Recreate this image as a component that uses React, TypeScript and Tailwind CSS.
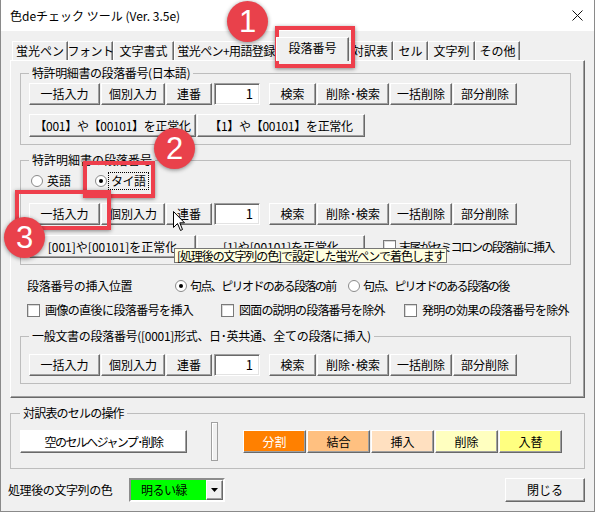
import React from "react";

const raised =
  "border border-t-white border-l-white border-r-[#696969] border-b-[#696969] shadow-[inset_-1px_-1px_0_#a0a0a0]";

function Btn({
  className = "",
  bg = "bg-[#f0f0f0]",
  children,
}: {
  className?: string;
  bg?: string;
  children: React.ReactNode;
}) {
  return (
    <div
      className={`flex items-center justify-center shrink-0 whitespace-nowrap leading-[14px] ${raised} ${bg} ${className}`}
    >
      {children}
    </div>
  );
}

function NumInput({ className = "" }: { className?: string }) {
  return (
    <div
      className={`w-[46px] h-[22px] shrink-0 bg-white border border-t-[#a0a0a0] border-l-[#a0a0a0] border-b-white border-r-white shadow-[inset_1px_1px_0_#696969,inset_-1px_-1px_0_#e3e3e3] flex items-center justify-end pr-[6px] text-[13px] leading-[14px] ${className}`}
    >
      1
    </div>
  );
}

function Radio({ checked = false }: { checked?: boolean }) {
  return (
    <span className="w-[12px] h-[12px] rounded-full border border-[#8a8a8a] bg-white flex items-center justify-center shrink-0">
      {checked && <span className="w-[4px] h-[4px] rounded-full bg-black" />}
    </span>
  );
}

function Check() {
  return (
    <span className="w-[13px] h-[13px] border border-[#7a7a7a] bg-white shrink-0 shadow-[inset_1px_1px_0_#d8d8d8]" />
  );
}

function Group({
  legend,
  className = "",
  legendClass = "",
  children,
}: {
  legend: string;
  className?: string;
  legendClass?: string;
  children: React.ReactNode;
}) {
  return (
    <fieldset className={`border border-[#bdbdbd] ${className}`}>
      <legend className={`px-[3px] leading-[16px] whitespace-nowrap ${legendClass}`}>{legend}</legend>
      {children}
    </fieldset>
  );
}

function ActionRow() {
  return (
    <div className="flex items-center h-[22px]">
      <Btn className="w-[71px] h-[22px]">一括入力</Btn>
      <Btn className="w-[64px] h-[22px] ml-[1px]">個別入力</Btn>
      <Btn className="w-[46px] h-[22px] ml-[1px]">連番</Btn>
      <NumInput className="ml-[2px]" />
      <Btn className="w-[47px] h-[22px] ml-[9px]">検索</Btn>
      <Btn className="w-[72px] h-[22px] ml-[1px]">削除･検索</Btn>
      <Btn className="w-[62px] h-[22px] ml-[1px]">一括削除</Btn>
      <Btn className="w-[64px] h-[22px] ml-[1px]">部分削除</Btn>
    </div>
  );
}

function Tab({
  label,
  w,
  selected = false,
  textClass = "",
}: {
  label: string;
  w: string;
  selected?: boolean;
  textClass?: string;
}) {
  if (selected) {
    return (
      <div
        className={`${w} h-[24px] -mb-[1px] -mx-[2px] relative z-10 bg-[#f0f0f0] border-t border-l border-t-white border-l-white border-r border-r-[#696969] shadow-[inset_-1px_0_0_#a0a0a0] flex justify-center pt-[2px] leading-[16px] whitespace-nowrap`}
      >
        {label}
      </div>
    );
  }
  return (
    <div
      className={`${w} h-[19px] bg-[#f0f0f0] border-t border-l border-t-white border-l-white border-r border-r-[#696969] shadow-[inset_-1px_0_0_#a0a0a0] flex items-center justify-center leading-[16px] whitespace-nowrap ${textClass}`}
    >
      {label}
    </div>
  );
}

export default function App() {
  return (
    <div className="w-[595px] h-[513px] bg-white relative overflow-hidden font-['Noto_Sans_CJK_JP','Noto_Sans',sans-serif] text-[12px] text-black">
      <div className="w-[595px] h-[512px] bg-[#f0f0f0] border-l border-r border-b border-[#8a8a8a] flex flex-col">
        {/* Title bar */}
        <div className="h-[31px] bg-white flex items-center justify-between pl-[9px] pr-[10px] shrink-0">
          <span className="leading-[16px] whitespace-nowrap">色deチェック ツール (Ver. 3.5e)</span>
          <svg width="11" height="11" viewBox="0 0 11 11" className="mr-[1px]">
            <path d="M0.5 0.5 L10.5 10.5 M10.5 0.5 L0.5 10.5" stroke="#111" strokeWidth="1" />
          </svg>
        </div>

        {/* Body */}
        <div className="flex flex-col pl-[9px] pr-[9px]">
          {/* Tabs */}
          <div className="mt-[6px] h-[23px] flex items-end pl-[2px]">
            <Tab label="蛍光ペン" w="w-[56px]" />
            <Tab label="フォント" w="w-[45px]" textClass="tracking-[-0.5px]" />
            <Tab label="文字書式" w="w-[61px]" />
            <Tab label="蛍光ペン+用語登録" w="w-[104px]" textClass="tracking-[-0.6px]" />
            <Tab label="段落番号" w="w-[73px]" selected />
            <Tab label="対訳表" w="w-[46px]" />
            <Tab label="セル" w="w-[35px]" />
            <Tab label="文字列" w="w-[47px]" />
            <Tab label="その他" w="w-[45px]" />
          </div>

          {/* Tab panel */}
          <div className="w-[575px] h-[338px] border border-t-white border-l-white border-r-[#696969] border-b-[#696969] shadow-[inset_-1px_-1px_0_#a0a0a0] pt-[4px] pl-[9px] flex flex-col">
            <Group
              legend="特許明細書の段落番号(日本語)"
              legendClass="tracking-[-0.4px]"
              className="w-[551px] px-[8px] pt-[2px] pb-[7px]"
            >
              <ActionRow />
              <div className="flex mt-[9px]">
                <Btn className="w-[167px] h-[23px] tracking-[-0.3px]">【001】や【00101】を正常化</Btn>
                <Btn className="w-[168px] h-[23px] ml-[1px] tracking-[-0.3px]">【1】や【00101】を正常化</Btn>
              </div>
            </Group>

            <Group legend="特許明細書の段落番号" className="w-[551px] mt-[7px] px-[8px] pt-[4px] pb-[6px]">
              <div className="flex items-center h-[18px] pl-[2px]">
                <div className="w-[64px] flex items-center gap-[4px]">
                  <Radio />
                  <span className="leading-[16px]">英語</span>
                </div>
                <div className="flex items-center gap-[1px]">
                  <Radio checked />
                  <span className="leading-[16px] px-[2px] border border-dotted border-black tracking-[-0.5px]">タイ語</span>
                </div>
              </div>
              <div className="mt-[13px]">
                <ActionRow />
              </div>
              <div className="flex items-center mt-[10px]">
                <Btn className="w-[167px] h-[23px]">[001]や[00101]を正常化</Btn>
                <Btn className="w-[168px] h-[23px] ml-[1px]">[1]や[00101]を正常化</Btn>
                <div className="flex items-center ml-[18px] gap-[3px]">
                  <Check />
                  <span className="leading-[16px] whitespace-nowrap tracking-[-1.7px]">末尾がセミコロンの段落前に挿入</span>
                </div>
              </div>
            </Group>

            <div className="flex items-center h-[18px] mt-[12px] pl-[7px]">
              <span className="w-[148px] leading-[16px] whitespace-nowrap tracking-[-0.3px]">段落番号の挿入位置</span>
              <div className="w-[173px] flex items-center gap-[3px]">
                <Radio checked />
                <span className="leading-[16px] whitespace-nowrap tracking-[-1.6px]">句点、ピリオドのある段落の前</span>
              </div>
              <div className="flex items-center gap-[3px]">
                <Radio />
                <span className="leading-[16px] whitespace-nowrap tracking-[-1.6px]">句点、ピリオドのある段落の後</span>
              </div>
            </div>

            <div className="flex items-center h-[18px] mt-[6px] pl-[7px]">
              <div className="w-[194px] flex items-center gap-[5px]">
                <Check />
                <span className="leading-[16px] whitespace-nowrap tracking-[-0.6px]">画像の直後に段落番号を挿入</span>
              </div>
              <div className="w-[183px] flex items-center gap-[5px]">
                <Check />
                <span className="leading-[16px] whitespace-nowrap tracking-[-0.8px]">図面の説明の段落番号を除外</span>
              </div>
              <div className="flex items-center gap-[5px]">
                <Check />
                <span className="leading-[16px] whitespace-nowrap tracking-[-0.7px]">発明の効果の段落番号を除外</span>
              </div>
            </div>

            <Group
              legend="一般文書の段落番号([0001]形式、日･英共通、全ての段落に挿入)"
              legendClass="tracking-[-0.3px]"
              className="w-[551px] mt-[9px] px-[8px] pt-[10px] pb-[7px]"
            >
              <ActionRow />
            </Group>
          </div>

          {/* Translation table group */}
          <Group
            legend="対訳表のセルの操作"
            legendClass="tracking-[-0.8px]"
            className="w-[575px] mt-[7px] px-[9px] pt-[1px] pb-[7px]"
          >
            <div className="flex items-center h-[39px]">
              <Btn className="w-[167px] h-[23px] tracking-[-1.6px]" bg="bg-white">
                空のセルへジャンプ･削除
              </Btn>
              <div className="w-[7px] h-[39px] ml-[24px] border border-[#a0a0a0] bg-[#f0f0f0] shadow-[inset_1px_1px_0_white]" />
              <div className="flex items-center gap-[1px] ml-[25px]">
                <Btn className="w-[63px] h-[23px] text-white" bg="bg-[#ff8000]">分割</Btn>
                <Btn className="w-[63px] h-[23px]" bg="bg-[#ffc080]">結合</Btn>
                <Btn className="w-[63px] h-[23px]" bg="bg-[#ffe0c0]">挿入</Btn>
                <Btn className="w-[63px] h-[23px]" bg="bg-[#ffffc0]">削除</Btn>
                <Btn className="w-[63px] h-[23px]" bg="bg-[#ffff80]">入替</Btn>
              </div>
            </div>
          </Group>

          {/* Bottom row */}
          <div className="flex items-center h-[25px] mt-[8px] -ml-[2px]">
            <span className="w-[121px] leading-[16px] whitespace-nowrap tracking-[-0.4px]">処理後の文字列の色</span>
            <div className="w-[96px] h-[24px] border-2 border-t-[#8c8c8c] border-l-[#8c8c8c] border-b-white border-r-white flex">
              <div className="flex-1 bg-[#00ff00] flex items-center pl-[10px] leading-[16px] whitespace-nowrap tracking-[-0.5px]">
                明るい緑
              </div>
              <div className={`w-[17px] h-full flex items-center justify-center ${raised} bg-[#f0f0f0]`}>
                <svg width="7" height="4" viewBox="0 0 7 4">
                  <path d="M0 0 H7 L3.5 4 Z" fill="#000" />
                </svg>
              </div>
            </div>
            <div className="flex-1" />
            <Btn className="w-[80px] h-[24px]">閉じる</Btn>
          </div>
        </div>
      </div>

      {/* Tooltip */}
      <div className="absolute left-[174px] top-[248px] w-[273px] h-[15px] bg-[#ffffe1] border border-[#767676] flex items-center pl-[2px] leading-[13px] whitespace-nowrap tracking-[-1.1px]">
        [処理後の文字列の色]で設定した蛍光ペンで着色します
      </div>

      {/* Mouse cursor */}
      <svg className="absolute left-[173px] top-[211px]" width="13" height="21" viewBox="0 0 13 21">
        <path
          d="M0.5 0.5 L0.5 16.5 L4.5 12.5 L7.5 19.5 L9.5 18.5 L6.8 11.8 L11.5 11.8 Z"
          fill="#fff"
          stroke="#000"
          strokeWidth="1"
        />
      </svg>

      {/* Annotation boxes */}
      <div className="absolute left-[275px] top-[26px] w-[80px] h-[42px] border-[4px] border-[#ee3f4c] shadow-[0_1px_4px_rgba(0,0,0,0.45)]" />
      <div className="absolute left-[83px] top-[161px] w-[72px] h-[37px] border-[4px] border-[#ee3f4c] shadow-[0_1px_4px_rgba(0,0,0,0.45)]" />
      <div className="absolute left-[15px] top-[190px] w-[96px] h-[40px] border-[4px] border-[#ee3f4c] shadow-[0_1px_4px_rgba(0,0,0,0.45)]" />

      {/* Annotation circles */}
      <div className="absolute left-[227px] top-[1px] w-[41px] h-[41px] rounded-full bg-[#e9414b] shadow-[0_1px_4px_rgba(0,0,0,0.45)] flex items-center justify-center text-white text-[31px] leading-none font-['Liberation_Sans',sans-serif]">
        1
      </div>
      <div className="absolute left-[154px] top-[128px] w-[41px] h-[41px] rounded-full bg-[#e9414b] shadow-[0_1px_4px_rgba(0,0,0,0.45)] flex items-center justify-center text-white text-[31px] leading-none font-['Liberation_Sans',sans-serif]">
        2
      </div>
      <div className="absolute left-[4px] top-[217px] w-[41px] h-[41px] rounded-full bg-[#e9414b] shadow-[0_1px_4px_rgba(0,0,0,0.45)] flex items-center justify-center text-white text-[31px] leading-none font-['Liberation_Sans',sans-serif]">
        3
      </div>
    </div>
  );
}
